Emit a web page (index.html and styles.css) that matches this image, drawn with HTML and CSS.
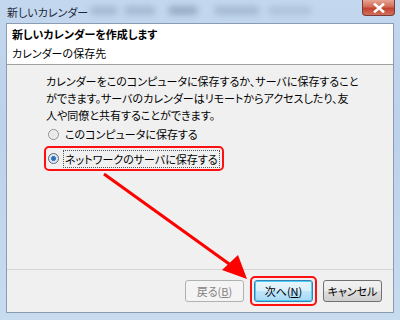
FILE: index.html
```html
<!DOCTYPE html>
<html lang="ja">
<head>
  <meta charset="utf-8">
  <title>新しいカレンダー</title>
  <link rel="stylesheet" href="styles.css">
</head>
<body>
  <div class="frame">
    <div class="titlebar">
      <span class="title">新しいカレンダー</span>
      <span class="blur b1"></span>
      <span class="blur b2"></span>
      <span class="blur b3"></span>
      <span class="blur b4"></span>
      <span class="blur b5"></span>
      <span class="close">
        <svg width="14" height="10" viewBox="0 0 14 10"><path d="M3 1.5 L11 8.5 M11 1.5 L3 8.5" stroke="#fff" stroke-width="2.6" stroke-linecap="square"/></svg>
      </span>
    </div>
    <div class="client">
      <div class="header">
        <div class="head-title">新しいカレンダーを作成します</div>
        <div class="head-sub">カレンダーの保存先</div>
      </div>
      <div class="content">
        <p class="desc">カレンダーをこのコンピュータに保存するか、サーバに保存すること<br>ができます。サーバのカレンダーはリモートからアクセスしたり、友<br>人や同僚と共有することができます。</p>
        <div class="option">
          <span class="radio"></span>
          <span class="label-text">このコンピュータに保存する</span>
        </div>
        <div class="option marked">
          <span class="radio checked"></span>
          <span class="label-text focus">ネットワークのサーバに保存する</span>
        </div>
      </div>
      <div class="footer">
        <button class="btn disabled">戻る(<u>B</u>)</button>
        <span class="mark-btn"><button class="btn default">次へ(<u>N</u>)</button></span>
        <button class="btn">キャンセル</button>
      </div>
    </div>
    <svg class="arrow" width="400" height="320" viewBox="0 0 400 320">
      <line x1="104" y1="174" x2="232" y2="266" stroke="#ff0000" stroke-width="3"/>
      <polygon points="247,279 222,270 238,255" fill="#ff0000"/>
    </svg>
  </div>
</body>
</html>
```

FILE: styles.css
```css
body {
  margin: 0;
  font-family: "Noto Sans CJK JP", "Noto Sans", sans-serif;
  font-size: 11px;
  color: #000;
}

.frame {
  position: relative;
  width: 400px;
  height: 320px;
  box-sizing: border-box;
  padding: 0 6px 7px 6px;
  background: linear-gradient(180deg, #c3d8ee 0%, #bcd2ea 40%, #c8dcef 100%);
  display: flex;
  flex-direction: column;
  overflow: hidden;
  font-feature-settings: "palt";
}

.titlebar {
  position: relative;
  height: 23px;
  flex: none;
}

.title {
  position: absolute;
  left: 1px;
  top: 4px;
  font-size: 11px;
  color: #1e2a3a;
  z-index: 2;
}

.blur {
  position: absolute;
  top: 6px;
  height: 9px;
  border-radius: 5px;
  background: #9fb4cc;
  filter: blur(3px);
  opacity: 0.8;
}
.b1 { left: 84px; width: 28px; }
.b2 { left: 118px; width: 32px; }
.b3 { left: 162px; width: 30px; background: #8ea3bc; }
.b4 { left: 208px; width: 46px; }
.b5 { left: 262px; width: 44px; opacity: 0.55; }

.close {
  position: absolute;
  right: -1px;
  top: 0;
  width: 33px;
  height: 16px;
  border: 1px solid #7a3a36;
  border-top: none;
  border-radius: 0 0 4px 4px;
  background: linear-gradient(180deg, #e7a593 0%, #d26b58 45%, #c2422f 55%, #d2715c 100%);
  box-sizing: border-box;
  display: flex;
  align-items: center;
  justify-content: center;
}

.client {
  flex: 1;
  border: 1px solid #8b9bb0;
  background: #f0f0f0;
  display: flex;
  flex-direction: column;
}

.header {
  height: 41px;
  box-sizing: border-box;
  background: #fff;
  border-bottom: 1px solid #a0a0a0;
  padding: 2px 5px 0 5px;
}

.head-title {
  font-weight: bold;
  line-height: 17px;
}

.head-sub {
  line-height: 20px;
}

.content {
  flex: 1;
  padding: 8px 20px 0 39px;
}

.desc {
  margin: 0 0 -1px 0;
  line-height: 17px;
  white-space: nowrap;
}

.option {
  display: flex;
  align-items: center;
  height: 22px;
  margin-left: 2px;
  white-space: nowrap;
}

.marked {
  align-self: flex-start;
  width: max-content;
  padding: 0 3px 0 2px;
  height: 21px;
  border: 2px solid #ff1010;
  border-radius: 5px;
  margin-left: -2px;
  margin-top: 1px;
}

.radio {
  width: 11px;
  height: 11px;
  border-radius: 50%;
  border: 1px solid #8e8f8f;
  background: radial-gradient(circle, #e8e8e8 30%, #f8f8f8 100%);
  box-sizing: border-box;
  margin-right: 5px;
  flex: none;
}

.radio.checked {
  background: radial-gradient(circle, #1f5fa8 0%, #3d86d0 35%, #d8e4f0 45%, #f4f4f4 100%);
  border-color: #5b6470;
}

.label-text {
  padding: 0 1px;
  line-height: 16px;
}

.focus {
  outline: 1px dotted #555;
}

.footer {
  height: 42px;
  flex: none;
  border-top: 1px solid #d5d5d5;
  display: flex;
  align-items: center;
  justify-content: flex-end;
  gap: 10px;
  padding-right: 11px;
}

.btn {
  width: 59px;
  height: 22px;
  border: 1px solid #707070;
  border-radius: 3px;
  background: linear-gradient(180deg, #f2f2f2 0%, #ebebeb 50%, #dddddd 51%, #cfcfcf 100%);
  font-family: "Noto Sans CJK JP", sans-serif;
  font-size: 11px;
  font-feature-settings: "palt";
  padding: 0;
  color: #000;
}

.btn.disabled {
  border-color: #adb2b5;
  background: #f4f4f4;
  color: #838383;
}

.btn.default {
  border-color: #3c7fb1;
  box-shadow: inset 0 0 0 1px #48d0f8;
  background: linear-gradient(180deg, #eaf6fd 0%, #d9f0fc 50%, #bee6fd 51%, #a7d9f5 100%);
}

.mark-btn {
  display: flex;
  padding: 2px;
  border: 2px solid #ff1010;
  border-radius: 5px;
  margin: 0 -4px;
}

.arrow {
  position: absolute;
  left: 0;
  top: 0;
  pointer-events: none;
}
```
